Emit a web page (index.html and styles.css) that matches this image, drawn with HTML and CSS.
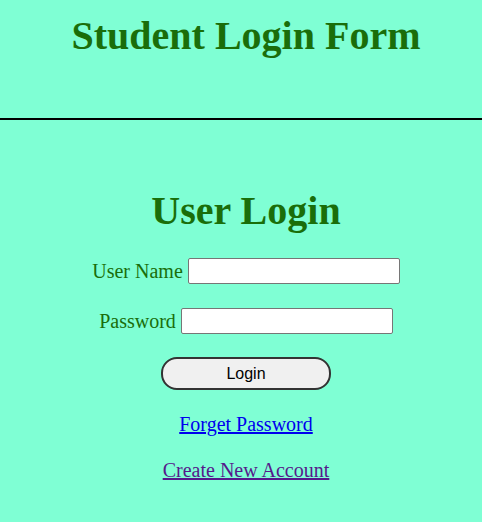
FILE: index.html
```html
<!DOCTYPE html>
<html>
<head>
<meta charset="utf-8">
<link rel="stylesheet" href="styles.css">
</head>
<body>
<header class="top">
  <h1 class="title">Student Login Form</h1>
</header>
<main class="login">
  <h2 class="login-title">User Login</h2>
  <div class="row row-first"><label class="lbl">User Name</label><input class="field" type="text"></div>
  <div class="row"><label class="lbl">Password</label><input class="field" type="password"></div>
  <div class="row"><button class="btn">Login</button></div>
  <div class="row"><a class="link" href="#">Forget Password</a></div>
  <div class="row"><a class="link visited" href="#">Create New Account</a></div>
</main>
</body>
</html>
```
FILE: styles.css
```css
html, body { margin: 0; padding: 0; }
body {
  background: #7fffd4;
  font-family: "Liberation Serif", "Times New Roman", serif;
  color: #1a6e0a;
}
.top {
  height: 118px;
  border-bottom: 2px solid #000;
  text-align: center;
  padding-left: 10px;
}
.title {
  margin: 0;
  padding-top: 13px;
  font-size: 40px;
  font-weight: bold;
  line-height: 46px;
}
.login {
  display: flex;
  flex-direction: column;
  align-items: center;
  padding-top: 68px;
  padding-left: 10px;
}
.login-title {
  margin: 0 0 24px;
  font-size: 40px;
  line-height: 46px;
}
.row {
  display: flex;
  align-items: center;
  gap: 5px;
  margin-bottom: 23px;
  font-size: 20px;
}
.row-first { margin-bottom: 24px; }
.field {
  box-sizing: border-box;
  width: 212px;
  height: 26px;
  border: 1px solid #767676;
  border-radius: 2px;
  padding: 0;
}
.btn {
  width: 170px;
  height: 33px;
  border: 2px solid #333;
  border-radius: 16px;
  background: #f0f0f0;
  font-family: "Liberation Sans", Arial, sans-serif;
  font-size: 16px;
  color: #000;
}
.link { color: #0000ee; font-size: 20px; }
.link.visited { color: #551a8b; }
```
